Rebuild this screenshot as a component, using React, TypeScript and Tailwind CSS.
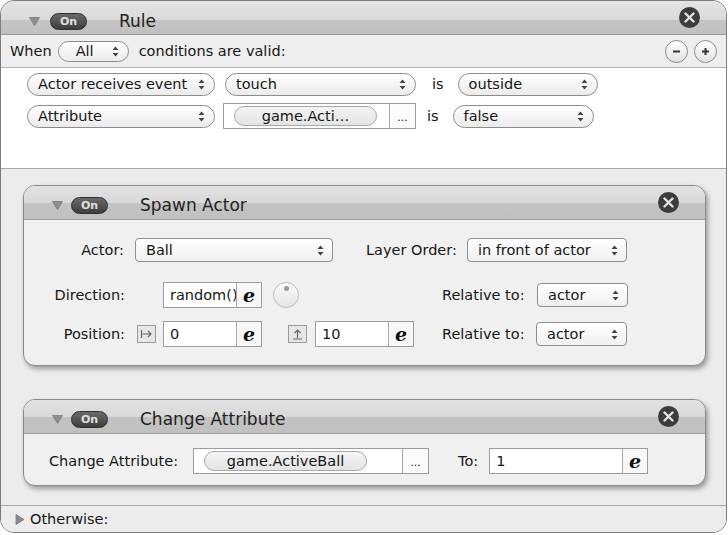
import React from 'react';

const Arrows = () => (
  <svg width="7" height="11" viewBox="0 0 7 11" className="shrink-0">
    <path d="M3.5 0.5 L6.5 4 L0.5 4 Z" fill="#444" />
    <path d="M3.5 10.5 L6.5 7 L0.5 7 Z" fill="#444" />
  </svg>
);

const DownTriangle = () => (
  <svg width="11" height="9" viewBox="0 0 11 9" className="shrink-0">
    <path d="M0.5 0.5 L10.5 0.5 L5.5 8.5 Z" fill="#8f8f8f" stroke="#7a7a7a" strokeWidth="0.8" />
  </svg>
);

const OnPill = () => (
  <div className="w-[37px] h-[17px] rounded-full bg-[linear-gradient(#6a6a6a,#3e3e3e)] border border-[#2e2e2e] flex items-center justify-center text-[11px] font-bold text-[#e0e0e0] leading-none shrink-0">
    On
  </div>
);

const CloseButton = () => (
  <div className="w-[21px] h-[21px] rounded-full bg-[#3c3c3c] flex items-center justify-center shrink-0">
    <svg width="11" height="11" viewBox="0 0 11 11">
      <path d="M1.5 1.5 L9.5 9.5 M9.5 1.5 L1.5 9.5" stroke="#e4e4e4" strokeWidth="2.4" strokeLinecap="round" />
    </svg>
  </div>
);

const RoundButton = ({ sign }: { sign: '-' | '+' }) => (
  <div className="w-[23px] h-[23px] rounded-full border border-[#8a8a8a] bg-[linear-gradient(#ffffff,#e2e2e2)] flex items-center justify-center shrink-0">
    <svg width="11" height="11" viewBox="0 0 11 11">
      <path d="M2 5.5 L9 5.5" stroke="#333" strokeWidth="2" />
      {sign === '+' && <path d="M5.5 2 L5.5 9" stroke="#333" strokeWidth="2" />}
    </svg>
  </div>
);

const Popup = ({
  text,
  width,
  className = '',
}: {
  text: string;
  width: string;
  className?: string;
}) => (
  <div
    className={`${width} h-[23px] rounded-full border border-[#8c8c8c] bg-[linear-gradient(#ffffff,#ebebeb)] flex items-center pl-[10px] pr-[9px] shrink-0 ${className}`}
  >
    <span className="flex-1 text-[14.5px] leading-none whitespace-nowrap">{text}</span>
    <Arrows />
  </div>
);

const Select = ({ text, width }: { text: string; width: string }) => (
  <div
    className={`${width} h-[24px] rounded-[4px] border border-[#8f8f8f] bg-[linear-gradient(#ffffff,#f0f0f0)] flex items-center pl-[10px] pr-[8px] shrink-0`}
  >
    <span className="flex-1 text-[14.5px] leading-none whitespace-nowrap">{text}</span>
    <Arrows />
  </div>
);

const AttributeBox = ({
  text,
  width,
  pillWidth,
}: {
  text: string;
  width: string;
  pillWidth: string;
}) => (
  <div className={`${width} h-[26px] border border-[#9c9c9c] bg-white flex items-center shrink-0`}>
    <div className="flex-1 flex items-center pl-[10px]">
      <div
        className={`${pillWidth} h-[20px] rounded-full border border-[#a8a8a8] bg-[linear-gradient(#f4f4f4,#e4e4e4)] flex items-center justify-center text-[14.5px] leading-none whitespace-nowrap`}
      >
        {text}
      </div>
    </div>
    <div className="w-[26px] h-full border-l border-[#a8a8a8] bg-[#fbfbfb] flex items-end justify-center pb-[5px] text-[11px] leading-none">
      ...
    </div>
  </div>
);

const ExprInput = ({ value, width }: { value: string; width: string }) => (
  <div className={`${width} h-[26px] border border-[#9c9c9c] bg-white flex items-stretch shrink-0`}>
    <div className="flex-1 overflow-hidden whitespace-nowrap flex items-center pl-[6px] text-[14.5px] leading-none">
      {value}
    </div>
    <div className="w-[25px] border-l border-[#a8a8a8] bg-[#f8f8f8] flex items-center justify-center font-['DejaVu_Serif',serif] font-bold italic text-[19px] leading-none text-[#111]">
      e
    </div>
  </div>
);

const AxisIcon = ({ up }: { up?: boolean }) => (
  <div className="w-[19px] h-[18px] border border-[#9a9a9a] bg-[#e6e6e6] flex items-center justify-center shrink-0">
    <svg width="13" height="12" viewBox="0 0 13 12">
      {up ? (
        <path d="M2 11 L11 11 M6.5 10 L6.5 2 M3.5 5 L6.5 2 L9.5 5" stroke="#666" strokeWidth="1.2" fill="none" />
      ) : (
        <path d="M1.5 2 L1.5 10 M2.5 6 L11 6 M8 3 L11 6 L8 9" stroke="#666" strokeWidth="1.2" fill="none" />
      )}
    </svg>
  </div>
);

const Knob = () => (
  <div className="w-[26px] h-[26px] rounded-full border border-[#bdbdbd] bg-[linear-gradient(#fafafa,#e4e4e4)] flex justify-center pt-[3px] shrink-0">
    <div className="w-[5px] h-[5px] rounded-full bg-[#9a9a9a]" />
  </div>
);

const BehaviorPanel = ({
  title,
  height,
  children,
}: {
  title: string;
  height: string;
  children: React.ReactNode;
}) => (
  <div
    className={`${height} mx-[22px] mr-[20px] rounded-[12px] border border-[#8a8a8a] bg-[#f0f0f0] shadow-[2px_3px_5px_rgba(0,0,0,0.35)] overflow-hidden flex flex-col`}
  >
    <div className="h-[34px] shrink-0 border-b border-[#9c9c9c] bg-[linear-gradient(#e2e2e2_0,#d8d8d8_17px,#c3c3c3_17px,#c0c0c0_100%)] flex items-center pl-[28px] pr-[26px]">
      <div className="flex-1 flex items-center pt-[6px]">
        <DownTriangle />
        <div className="ml-[8px]">
          <OnPill />
        </div>
        <span className="ml-[32px] text-[17px] leading-none text-[#222]">{title}</span>
      </div>
      <CloseButton />
    </div>
    {children}
  </div>
);

export default function App() {
  return (
    <div className="w-[728px] h-[535px] bg-white font-['DejaVu_Sans',sans-serif] text-[#161616]">
      <div className="w-[727px] h-[533px] rounded-[14px] border border-[#7c7c7c] overflow-hidden flex flex-col bg-[#ececec]">
        {/* rule header */}
        <div className="h-[34px] shrink-0 border-b border-[#9a9a9a] bg-[linear-gradient(#e4e4e4_0,#d9d9d9_19px,#c4c4c4_19px,#c1c1c1_100%)] flex items-center pl-[28px] pr-[26px]">
          <div className="flex-1 flex items-center pt-[7px]">
            <DownTriangle />
            <div className="ml-[10px]">
              <OnPill />
            </div>
            <span className="ml-[32px] text-[17px] leading-none text-[#222]">Rule</span>
          </div>
          <CloseButton />
        </div>

        {/* when row */}
        <div className="h-[33px] shrink-0 border-b border-[#b4b4b4] bg-[#eeeeee] flex items-center pl-[9px] pr-[9px]">
          <span className="text-[14.5px] leading-none">When</span>
          <Popup text="All" width="w-[71px]" className="ml-[6px] !pl-[17px] !h-[21px]" />
          <span className="ml-[10px] text-[14.5px] leading-none flex-1">conditions are valid:</span>
          <div className="flex gap-[6px]">
            <RoundButton sign="-" />
            <RoundButton sign="+" />
          </div>
        </div>

        {/* conditions */}
        <div className="h-[101px] shrink-0 border-b border-[#a8a8a8] bg-white pl-[26px] pt-[5px] flex flex-col gap-[7px]">
          <div className="flex items-center">
            <Popup text="Actor receives event" width="w-[188px]" />
            <Popup text="touch" width="w-[191px]" className="ml-[10px]" />
            <span className="ml-[16px] text-[14.5px] leading-none">is</span>
            <Popup text="outside" width="w-[140px]" className="ml-[14px]" />
          </div>
          <div className="flex items-center">
            <Popup text="Attribute" width="w-[188px]" />
            <div className="ml-[8px]">
              <AttributeBox text="game.Acti…" width="w-[193px]" pillWidth="w-[143px]" />
            </div>
            <span className="ml-[11px] text-[14.5px] leading-none">is</span>
            <Popup text="false" width="w-[141px]" className="ml-[14px]" />
          </div>
        </div>

        {/* actions */}
        <div className="h-[337px] shrink-0 border-b border-[#a8a8a8] pt-[16px] flex flex-col gap-[33px]">
          <BehaviorPanel title="Spawn Actor" height="h-[181px]">
            <div className="pt-[18px] flex flex-col text-[14.5px] leading-none">
              <div className="flex items-center h-[24px]">
                <span className="w-[100px] text-right">Actor:</span>
                <div className="ml-[11px]">
                  <Select text="Ball" width="w-[198px]" />
                </div>
                <span className="ml-[33px]">Layer Order:</span>
                <div className="ml-[10px]">
                  <Select text="in front of actor" width="w-[160px]" />
                </div>
              </div>
              <div className="flex items-center h-[26px] mt-[20px]">
                <span className="w-[101px] text-right">Direction:</span>
                <div className="w-[38px]" />
                <ExprInput value="random()" width="w-[99px]" />
                <div className="w-[180px] flex items-center pl-[11px]">
                  <Knob />
                </div>
                <span className="w-[85px]">Relative to:</span>
                <div className="ml-[10px]">
                  <Select text="actor" width="w-[91px]" />
                </div>
              </div>
              <div className="flex items-center h-[26px] mt-[13px]">
                <span className="w-[101px] text-right">Position:</span>
                <div className="w-[38px] pl-[12px]">
                  <AxisIcon />
                </div>
                <ExprInput value="0" width="w-[99px]" />
                <div className="w-[180px] flex items-center pl-[26px]">
                  <AxisIcon up />
                  <div className="ml-[8px]">
                    <ExprInput value="10" width="w-[99px]" />
                  </div>
                </div>
                <span className="w-[85px]">Relative to:</span>
                <div className="ml-[9px]">
                  <Select text="actor" width="w-[91px]" />
                </div>
              </div>
            </div>
          </BehaviorPanel>

          <BehaviorPanel title="Change Attribute" height="h-[87px]">
            <div className="pt-[14px] flex items-center text-[14.5px] leading-none">
              <span className="ml-[25px] w-[133px]">Change Attribute:</span>
              <div className="ml-[11px]">
                <AttributeBox text="game.ActiveBall" width="w-[236px]" pillWidth="w-[163px]" />
              </div>
              <span className="ml-[29px]">To:</span>
              <div className="ml-[11px]">
                <ExprInput value="1" width="w-[159px]" />
              </div>
            </div>
          </BehaviorPanel>
        </div>

        {/* otherwise */}
        <div className="flex-1 flex items-center pl-[14px] bg-[#ececec]">
          <svg width="10" height="11" viewBox="0 0 10 11">
            <path d="M1 0.5 L9 5.5 L1 10.5 Z" fill="#8a8a8a" stroke="#777" strokeWidth="0.8" />
          </svg>
          <span className="ml-[5px] text-[14.5px] leading-none">Otherwise:</span>
        </div>
      </div>
    </div>
  );
}
